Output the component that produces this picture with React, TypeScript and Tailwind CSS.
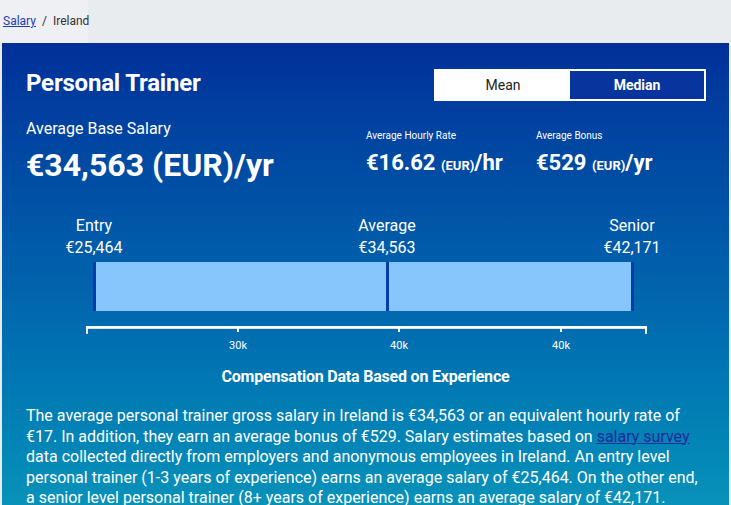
const bands = [
  { label: "Entry", value: "€25,464", ml: "ml-[52px]" },
  { label: "Average", value: "€34,563", ml: "ml-[213px]" },
  { label: "Senior", value: "€42,171", ml: "ml-[165px]" },
];

const ticks = [
  { x: 154, label: "30k" },
  { x: 315, label: "40k" },
  { x: 477, label: "40k" },
];

function Axis() {
  return (
    <svg width="566" height="30" viewBox="0 0 566 30" className="ml-[82px] block">
      <path d="M3 9 V3 H562 V9" fill="none" stroke="#d6e2ee" strokeWidth="2" transform="translate(0 1)" />
      <path d="M3 9 V3 H562 V9" fill="none" stroke="#ffffff" strokeWidth="2" />
      {ticks.map((t) => (
        <g key={t.x}>
          <line x1={t.x} y1="3" x2={t.x} y2="8" stroke="#ffffff" strokeWidth="2" />
          <text
            x={t.x}
            y="25"
            textAnchor="middle"
            fill="#ffffff"
            fontSize="11"
            fontFamily="Roboto, sans-serif"
          >
            {t.label}
          </text>
        </g>
      ))}
    </svg>
  );
}

export default function App() {
  return (
    <div className="min-h-[505px] bg-[#e9ecef] font-['Roboto',sans-serif] overflow-hidden">
      {/* Breadcrumb */}
      <div className="h-[43px] flex">
        <div className="w-[88px] bg-[#eef0f3] pl-[3px] pt-[12px] text-[12px] text-[#333]">
          <a href="#" className="text-[#1b3fae] underline">
            Salary
          </a>
          <span className="mx-[6px]">/</span>
          <span>Ireland</span>
        </div>
      </div>

      {/* Salary panel */}
      <div className="mx-[2px] bg-linear-to-b from-[#022f99] via-[#0263ad] to-[#0b97bb] text-white px-[24px] pt-[26px] pb-[20px]">
        <div className="flex items-center justify-between">
          <h1 className="text-[24px] font-bold leading-none tracking-[-0.2px] -mt-[4px]">Personal Trainer</h1>
          <div className="flex w-[272px] h-[32px] border-2 border-white text-[14px] mr-[-1px]">
            <button className="flex-1 bg-white text-[#222] font-normal">Mean</button>
            <button className="w-[134px] bg-[#07349d] text-white font-bold">Median</button>
          </div>
        </div>

        <div className="flex mt-[18px]">
          <div className="w-[340px]">
            <div className="text-[16px] leading-[20px]">Average Base Salary</div>
            <div className="text-[32px] font-bold leading-[40px] mt-[6px]">€34,563 (EUR)/yr</div>
          </div>
          <div className="w-[170px]">
            <div className="text-[10px] leading-[14px] mt-[10px]">Average Hourly Rate</div>
            <div className="text-[22px] font-bold leading-[28px] mt-[6px]">
              €16.62 <span className="text-[13px]">(EUR)</span>/hr
            </div>
          </div>
          <div>
            <div className="text-[10px] leading-[14px] mt-[10px]">Average Bonus</div>
            <div className="text-[22px] font-bold leading-[28px] mt-[6px]">
              €529 <span className="text-[13px]">(EUR)</span>/yr
            </div>
          </div>
        </div>

        {/* Experience bar */}
        <div className="-mx-[24px] mt-[30px]">
          <div className="flex">
            {bands.map((b) => (
              <div key={b.label} className={`w-[80px] text-center text-[16px] leading-[21px] ${b.ml}`}>
                <div>{b.label}</div>
                <div className="mt-[1px]">{b.value}</div>
              </div>
            ))}
          </div>
          <div className="ml-[91px] mt-[4px] flex w-[541px] h-[49px] bg-[#87c6fc]">
            <div className="w-[3px] bg-[#0a3bab]" />
            <div className="w-[290px]" />
            <div className="w-[3px] bg-[#0a3bab]" />
            <div className="flex-1" />
            <div className="w-[3px] bg-[#0a3bab]" />
          </div>
          <div className="mt-[13px]">
            <Axis />
          </div>
        </div>

        <h2 className="text-center text-[16px] font-bold leading-[20px] mt-[13px] tracking-[-0.2px]">
          Compensation Data Based on Experience
        </h2>

        <p className="mt-[19px] text-[16px] leading-[20.5px] pr-[2px]">
          The average personal trainer gross salary in Ireland is €34,563 or an equivalent hourly rate of
          €17. In addition, they earn an average bonus of €529. Salary estimates based on{" "}
          <a href="#" className="text-[#1c2b9c] underline">
            salary survey
          </a>{" "}
          data collected directly from employers and anonymous employees in Ireland. An entry level
          personal trainer (1-3 years of experience) earns an average salary of €25,464. On the other end,
          a senior level personal trainer (8+ years of experience) earns an average salary of €42,171.
        </p>
      </div>
    </div>
  );
}
